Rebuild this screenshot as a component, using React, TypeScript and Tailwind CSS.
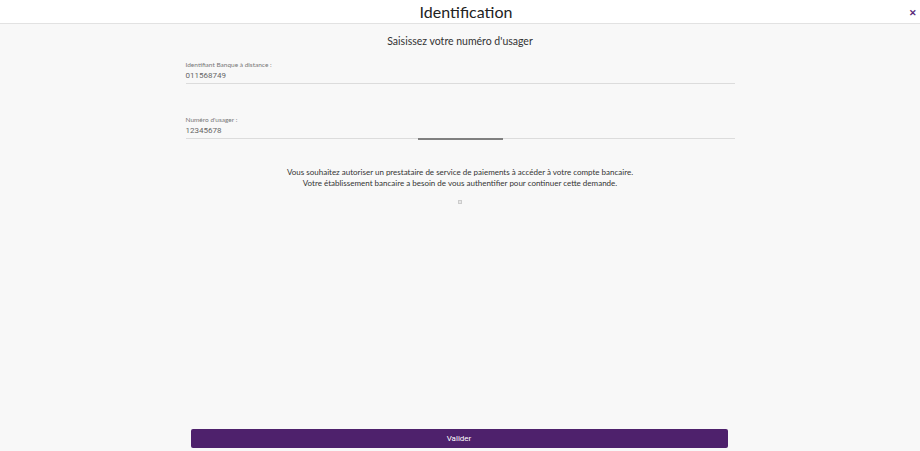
import React from 'react'

const Field = ({ label, value, progress }: { label: string; value: string; progress?: boolean }) => (
  <div className="relative">
    <div className="text-[6.5px] leading-[8px] text-[#777] mt-[1px]">{label}</div>
    <div className="text-[8px] leading-[12px] text-[#666] mt-[1px] font-['Roboto',sans-serif]">{value}</div>
    <div className="h-px bg-[#dcdcdc] mt-[1px]" />
    {progress && <div className="absolute left-[232px] bottom-[-1px] w-[85px] h-[2px] bg-[#808080]" />}
  </div>
)

const App: React.FC = () => {
  return (
    <div className="w-[920px] h-[451px] bg-[#f8f8f8] flex flex-col font-['Lato','Open_Sans',sans-serif]">
      {/* en-tête */}
      <div className="relative h-[24px] bg-white border-b border-[#e2e2e2] flex items-center justify-center pl-[12px]">
        <h1 className="text-[16px] text-[#222] leading-none">Identification</h1>
        <span className="absolute right-[3px] top-[8px] text-[9px] font-bold text-[#5b2a7a] leading-none">✕</span>
      </div>

      <div className="flex-1 flex flex-col items-center">
        <h2 className="mt-[10px] text-[10.5px] leading-[14px] text-[#333]">Saisissez votre numéro d'usager</h2>

        <div className="w-[549px] mt-[12px]">
          <Field label="Identifiant Banque à distance :" value="011568749" />
          <div className="h-[31px]" />
          <Field label="Numéro d'usager :" value="12345678" progress />
        </div>

        <div className="mt-[28px] text-[8px] leading-[11px] text-[#333] text-center">
          <p>Vous souhaitez autoriser un prestataire de service de paiements à accéder à votre compte bancaire.</p>
          <p>Votre établissement bancaire a besoin de vous authentifier pour continuer cette demande.</p>
        </div>

        <div className="mt-[11px] w-[4px] h-[4px] border border-[#ccc] bg-[#e8e8e8]" />

        <div className="flex-1" />

        <button className="mb-[3px] w-[537px] h-[19px] rounded-[2px] bg-[#4e216c] text-white text-[8px] font-['Roboto',sans-serif] -translate-x-[1px]">
          Valider
        </button>
      </div>
    </div>
  )
}

export default App
